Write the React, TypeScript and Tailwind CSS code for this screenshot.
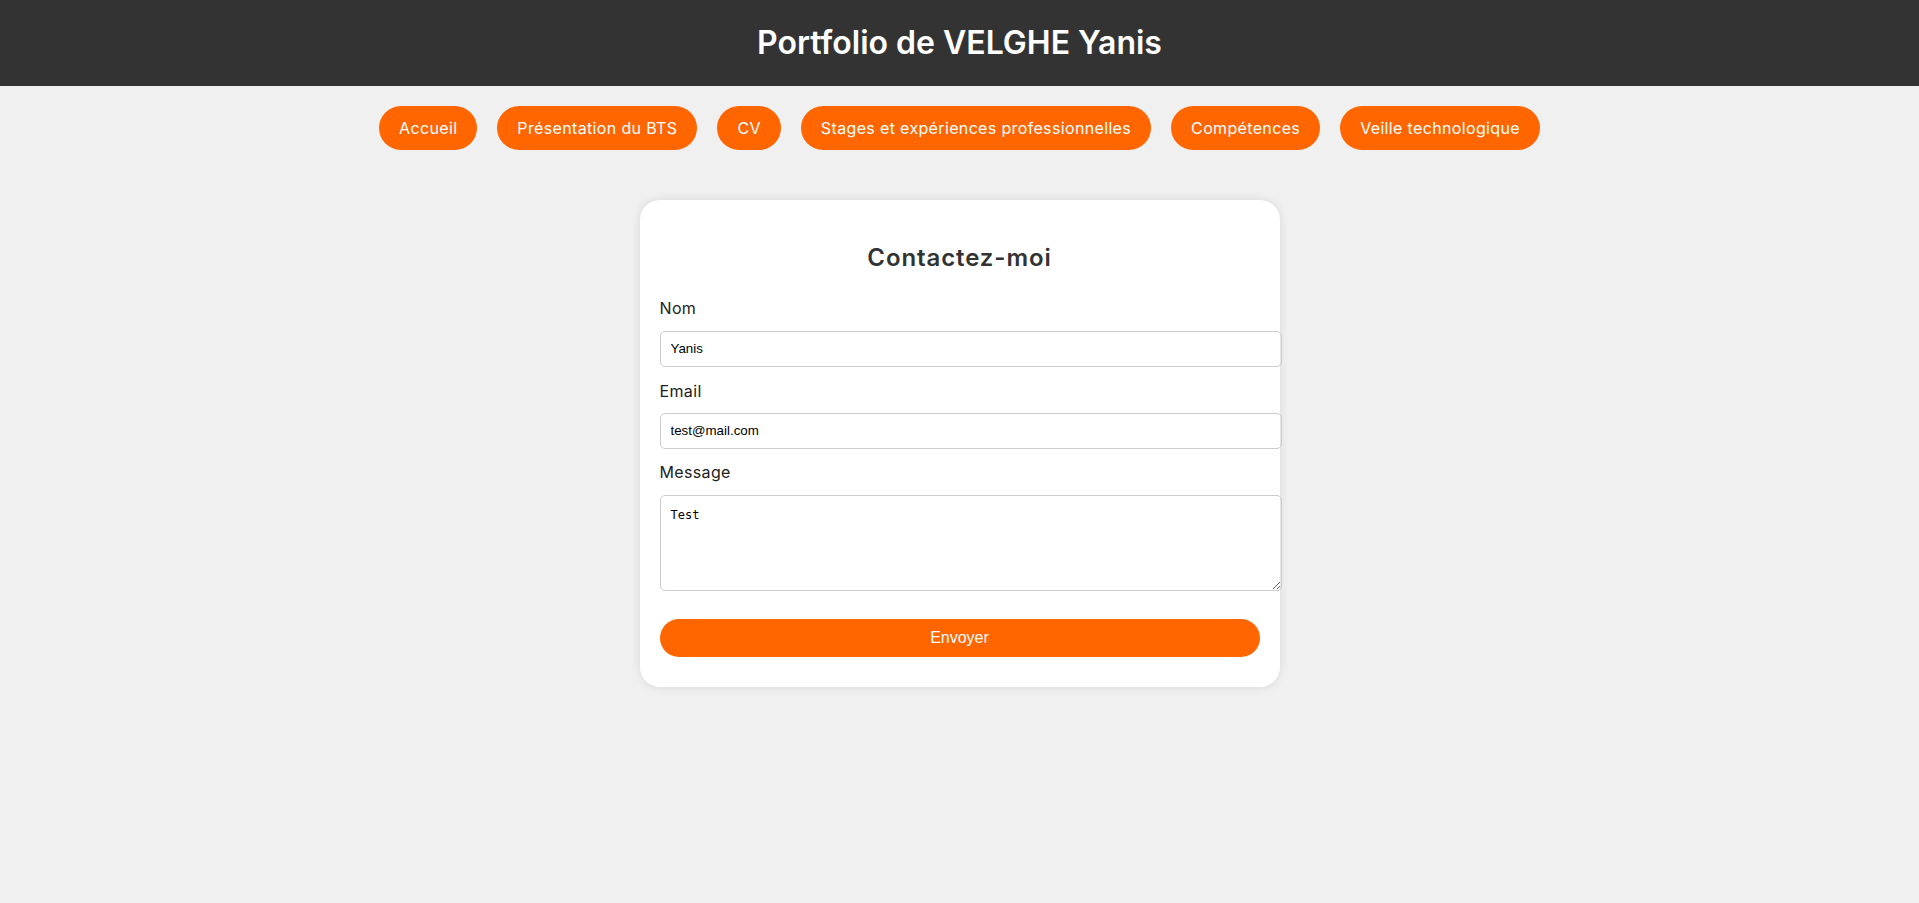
const links = [
  'Accueil',
  'Présentation du BTS',
  'CV',
  'Stages et expériences professionnelles',
  'Compétences',
  'Veille technologique',
];

export default function App() {
  return (
    <div className="min-h-screen bg-[#f0f0f0] font-['Inter',sans-serif] tracking-[0.35px] text-[#333]">
      <header className="h-[86px] bg-[#333] flex items-center justify-center">
        <h1 className="text-[32px] font-semibold tracking-normal text-white leading-none">Portfolio de VELGHE Yanis</h1>
      </header>

      <nav className="mt-5 flex justify-center gap-5">
        {links.map((l) => (
          <a
            key={l}
            href="#"
            className="px-5 py-2.5 leading-6 text-base rounded-full bg-[#ff6600] text-white"
          >
            {l}
          </a>
        ))}
      </nav>

      <section className="mt-[50px] mx-auto w-[640px] bg-white rounded-[20px] p-5 pb-[30px] shadow-[0_0_10px_rgba(0,0,0,0.1)]">
        <h2 className="mt-5 mb-5 text-2xl leading-9 font-semibold tracking-[0.9px] text-center text-[#333]">Contactez-moi</h2>
        <form onSubmit={(e) => e.preventDefault()}>
          <label className="block leading-6 text-base text-[#222] mb-[11px]">Nom</label>
          <input
            defaultValue="Yanis"
            className="block box-content w-full h-[14px] p-2.5 mb-3 border border-[#ccc] rounded-[5px] font-['Liberation_Sans',Arial,sans-serif] tracking-normal text-[13.33px] text-black outline-none"
          />
          <label className="block leading-6 text-base text-[#222] mb-2.5">Email</label>
          <input
            defaultValue="test@mail.com"
            className="block box-content w-full h-[14px] p-2.5 mb-[11px] border border-[#ccc] rounded-[5px] font-['Liberation_Sans',Arial,sans-serif] tracking-normal text-[13.33px] text-black outline-none"
          />
          <label className="block leading-6 text-base text-[#222] mb-[11px]">Message</label>
          <textarea
            defaultValue="Test"
            className="block box-content w-full h-[74px] p-2.5 border border-[#ccc] rounded-[5px] font-['DejaVu_Sans_Mono',monospace] tracking-normal text-[12px] text-black outline-none"
          />
          <button
            type="submit"
            className="mt-7 block w-full h-[38px] rounded-full bg-[#ff6600] text-white text-base tracking-normal font-['Liberation_Sans',Arial,sans-serif]"
          >
            Envoyer
          </button>
        </form>
      </section>
    </div>
  );
}
